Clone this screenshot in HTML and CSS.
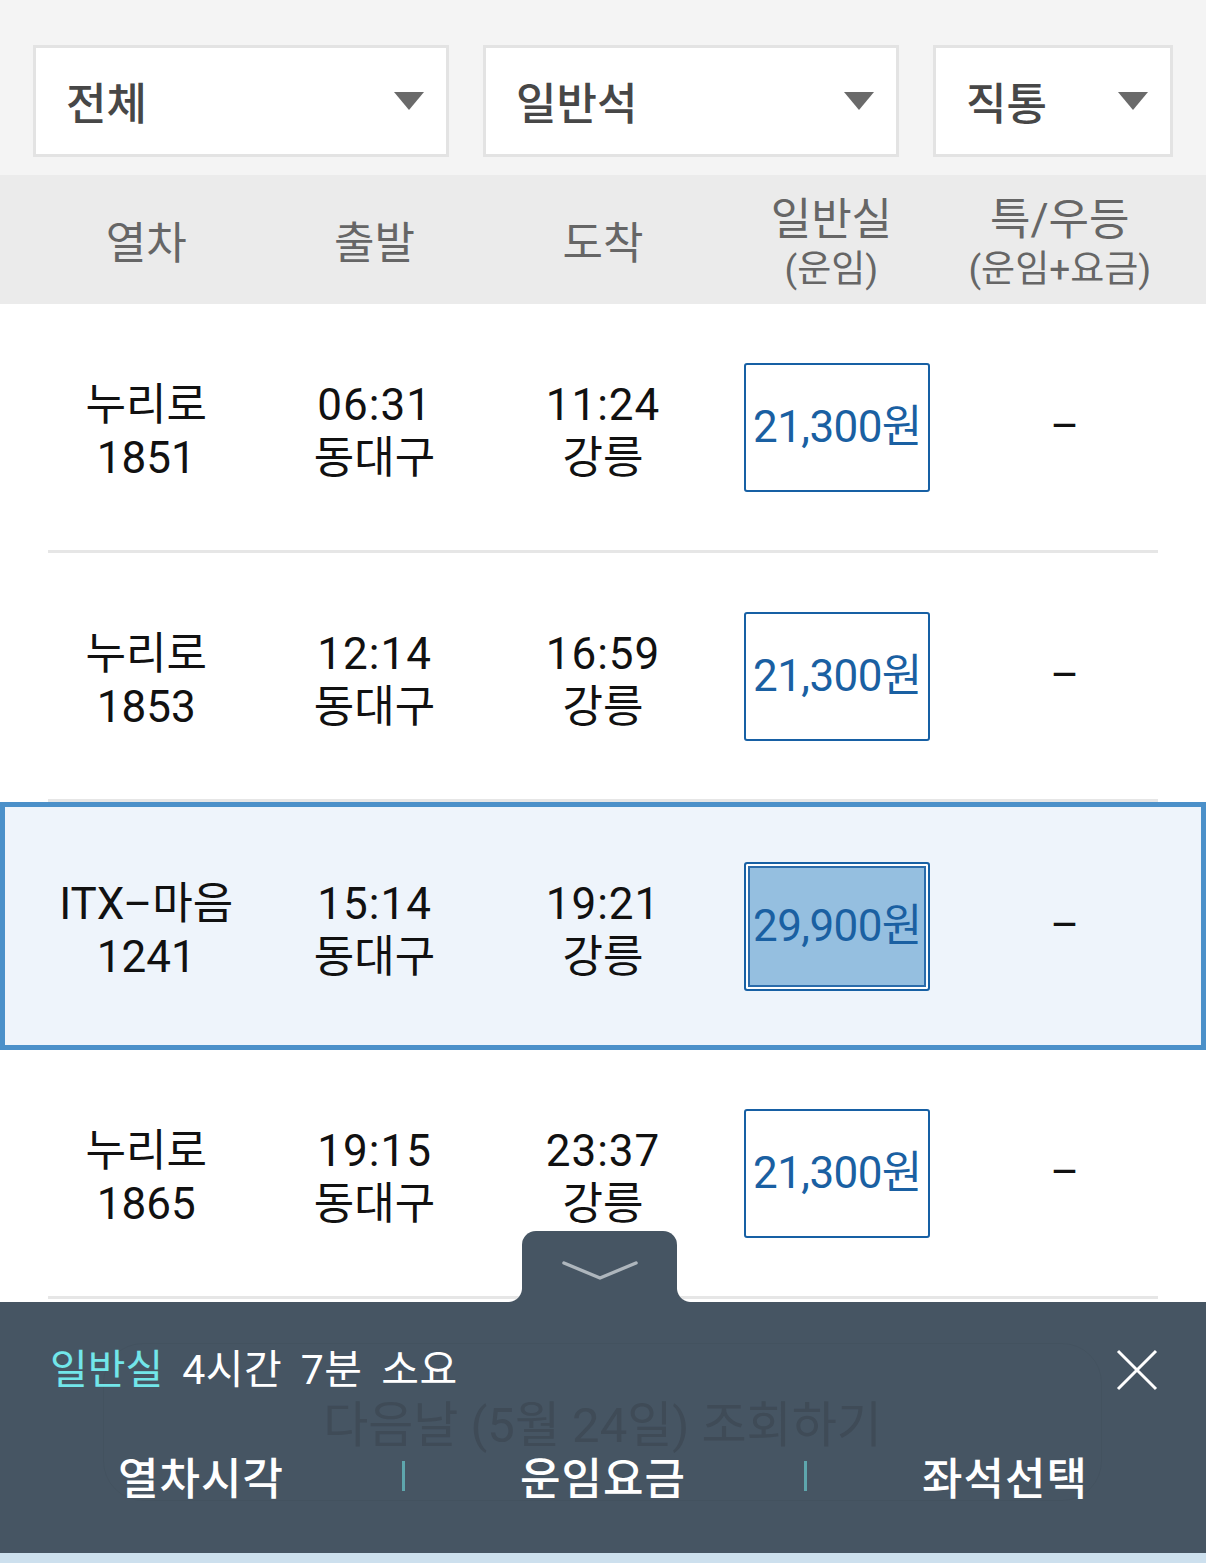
FILE: index.html
```html
<!DOCTYPE html>
<html lang="ko">
<head>
<meta charset="utf-8">
<title>열차 조회</title>
<link rel="stylesheet" href="styles.css">
</head>
<body>
<div class="page">
  <div class="filters">
    <div class="select wide"><span>전체</span><i class="caret"></i></div>
    <div class="select wide"><span>일반석</span><i class="caret"></i></div>
    <div class="select narrow"><span>직통</span><i class="caret"></i></div>
  </div>

  <div class="thead">
    <div class="th">열차</div>
    <div class="th">출발</div>
    <div class="th">도착</div>
    <div class="th two"><span>일반실</span><small>(운임)</small></div>
    <div class="th two"><span>특/우등</span><small>(운임+요금)</small></div>
  </div>

  <div class="rows">
    <div class="row">
      <div class="cell"><span>누리로</span><span>1851</span></div>
      <div class="cell"><span class="time">06:31</span><span>동대구</span></div>
      <div class="cell"><span class="time">11:24</span><span>강릉</span></div>
      <div class="cell fare-cell"><div class="fare">21,300원</div></div>
      <div class="cell dash">–</div>
    </div>
    <div class="divider"></div>
    <div class="row">
      <div class="cell"><span>누리로</span><span>1853</span></div>
      <div class="cell"><span class="time">12:14</span><span>동대구</span></div>
      <div class="cell"><span class="time">16:59</span><span>강릉</span></div>
      <div class="cell fare-cell"><div class="fare">21,300원</div></div>
      <div class="cell dash">–</div>
    </div>
    <div class="divider"></div>
    <div class="row selected">
      <div class="cell"><span>ITX–마음</span><span>1241</span></div>
      <div class="cell"><span class="time">15:14</span><span>동대구</span></div>
      <div class="cell"><span class="time">19:21</span><span>강릉</span></div>
      <div class="cell fare-cell"><div class="fare active">29,900원</div></div>
      <div class="cell dash">–</div>
    </div>
    <div class="row">
      <div class="cell"><span>누리로</span><span>1865</span></div>
      <div class="cell"><span class="time">19:15</span><span>동대구</span></div>
      <div class="cell"><span class="time">23:37</span><span>강릉</span></div>
      <div class="cell fare-cell"><div class="fare">21,300원</div></div>
      <div class="cell dash">–</div>
    </div>
    <div class="divider"></div>
  </div>
</div>

<div class="panel">
  <div class="panel-tab">
    <svg width="76" height="22" viewBox="0 0 76 22"><polyline points="2,4 38,19 74,4" fill="none" stroke="#aeb6bd" stroke-width="3.5" stroke-linecap="round" stroke-linejoin="round"/></svg>
  </div>
  <div class="ghost">다음날 (5월 24일) 조회하기</div>
  <div class="panel-body">
    <div class="info">
      <p class="duration"><span class="cls">일반실</span><span class="time-req">4시간 7분 소요</span></p>
      <svg class="close" width="42" height="42" viewBox="0 0 42 42"><path d="M2 2 L40 40 M40 2 L2 40" stroke="#ffffff" stroke-width="3" fill="none"/></svg>
    </div>
    <div class="tabs">
      <div class="tab">열차시각</div>
      <div class="tab">운임요금</div>
      <div class="tab">좌석선택</div>
    </div>
  </div>
</div>
</body>
</html>
```

FILE: styles.css
```css
html, body {
  margin: 0;
  padding: 0;
}
body {
  background: #ffffff;
  font-family: Roboto, "Noto Sans CJK KR", "Noto Sans", sans-serif;
  color: #111;
  width: 1206px;
  height: 1563px;
  overflow: hidden;
}

/* filters */
.filters {
  background: #f4f4f4;
  display: flex;
  gap: 34px;
  padding: 45px 33px 18px;
}
.select {
  box-sizing: border-box;
  height: 112px;
  background: #fff;
  border: 3px solid #e3e3e3;
  display: flex;
  align-items: center;
  justify-content: space-between;
  padding: 0 22px 0 30px;
  font-size: 44px;
  font-weight: 500;
  color: #474747;
}
.select.wide { flex: 0 0 416px; }
.select.narrow { flex: 0 0 240px; }
.caret {
  width: 0;
  height: 0;
  border-left: 15px solid transparent;
  border-right: 15px solid transparent;
  border-top: 18px solid #6a6a6a;
}

/* header */
.thead {
  box-sizing: border-box;
  background: #ebebeb;
  height: 129px;
  display: grid;
  grid-template-columns: repeat(5, 1fr);
  padding: 8px 32px 0;
  align-items: center;
  text-align: center;
  color: #666;
  font-size: 44px;
  line-height: 52px;
}
.th.two span { display: block; line-height: 52px; }
.th.two small {
  display: block;
  font-size: 37px;
  line-height: 48px;
}

/* rows */
.row {
  box-sizing: border-box;
  height: 246px;
  display: grid;
  grid-template-columns: repeat(5, 1fr);
  padding: 0 32px;
  align-items: center;
  text-align: center;
  font-size: 44px;
  line-height: 53px;
  color: #111;
}
.row.selected {
  height: 248px;
  border: 5px solid #4b90c9;
  background: #eef4fb;
  padding: 0 27px;
}
.cell {
  display: flex;
  flex-direction: column;
  align-items: center;
  padding-top: 10px;
}
.time { letter-spacing: 1px; }
.divider {
  height: 3px;
  background: #e6e6e6;
  margin: 0 48px;
}
.fare-cell { padding: 0 0 0 12px; }
.fare {
  box-sizing: border-box;
  width: 186px;
  height: 129px;
  border: 2px solid #1760a4;
  border-radius: 3px;
  display: flex;
  align-items: center;
  justify-content: center;
  color: #1a60a2;
  font-size: 44px;
  letter-spacing: -0.6px;
  white-space: nowrap;
  background: #fff;
}
.fare.active {
  background: #95bfe0;
  box-shadow: inset 0 0 0 2px #ffffff, inset 0 0 0 4px #2b6cab;
}
.dash {
  padding: 0 0 2px 10px;
}

/* bottom panel */
.panel {
  position: fixed;
  left: 0;
  right: 0;
  bottom: 0;
  height: 251px;
  border-bottom: 10px solid #cde0ee;
  background: #465563;
  display: grid;
}
.panel-tab {
  position: absolute;
  left: 522px;
  top: -71px;
  width: 155px;
  height: 71px;
  background: #465563;
  border-radius: 14px 14px 0 0;
  display: flex;
  justify-content: center;
  padding-top: 28px;
  box-sizing: border-box;
}
.panel-tab::before,
.panel-tab::after {
  content: "";
  position: absolute;
  bottom: 0;
  width: 14px;
  height: 14px;
}
.panel-tab::before {
  left: -14px;
  background: radial-gradient(circle at 0 0, transparent 13.5px, #465563 14.5px);
}
.panel-tab::after {
  right: -14px;
  background: radial-gradient(circle at 100% 0, transparent 13.5px, #465563 14.5px);
}
.ghost {
  grid-area: 1 / 1;
  margin: 41px 104px 0 103px;
  height: 158px;
  border-radius: 40px;
  border: 1px solid rgba(0, 0, 0, 0.035);
  color: #3f4b57;
  font-size: 49px;
  display: flex;
  align-items: center;
  justify-content: center;
  box-sizing: border-box;
  padding-bottom: 4px;
}
.panel-body {
  grid-area: 1 / 1;
  display: flex;
  flex-direction: column;
}
.info {
  display: flex;
  justify-content: space-between;
  align-items: center;
  padding: 40px 48px 0 50px;
  height: 56px;
}
.duration {
  margin: 0;
  font-size: 41px;
  line-height: 56px;
  color: #ffffff;
  display: flex;
  gap: 19px;
}
.duration .cls { color: #72e6ea; }
.duration .time-req { word-spacing: 8px; letter-spacing: 0.5px; }
.tabs {
  display: flex;
  margin-top: 38px;
  height: 80px;
  align-items: center;
}
.tab {
  flex: 0 0 402px;
  text-align: center;
  color: #ffffff;
  font-size: 44px;
  letter-spacing: 1px;
  font-weight: 500;
  position: relative;
}
.tab + .tab::before {
  content: "";
  position: absolute;
  left: 0;
  top: 50%;
  margin-top: -15px;
  width: 3px;
  height: 30px;
  background: #5ea6ad;
}
```
